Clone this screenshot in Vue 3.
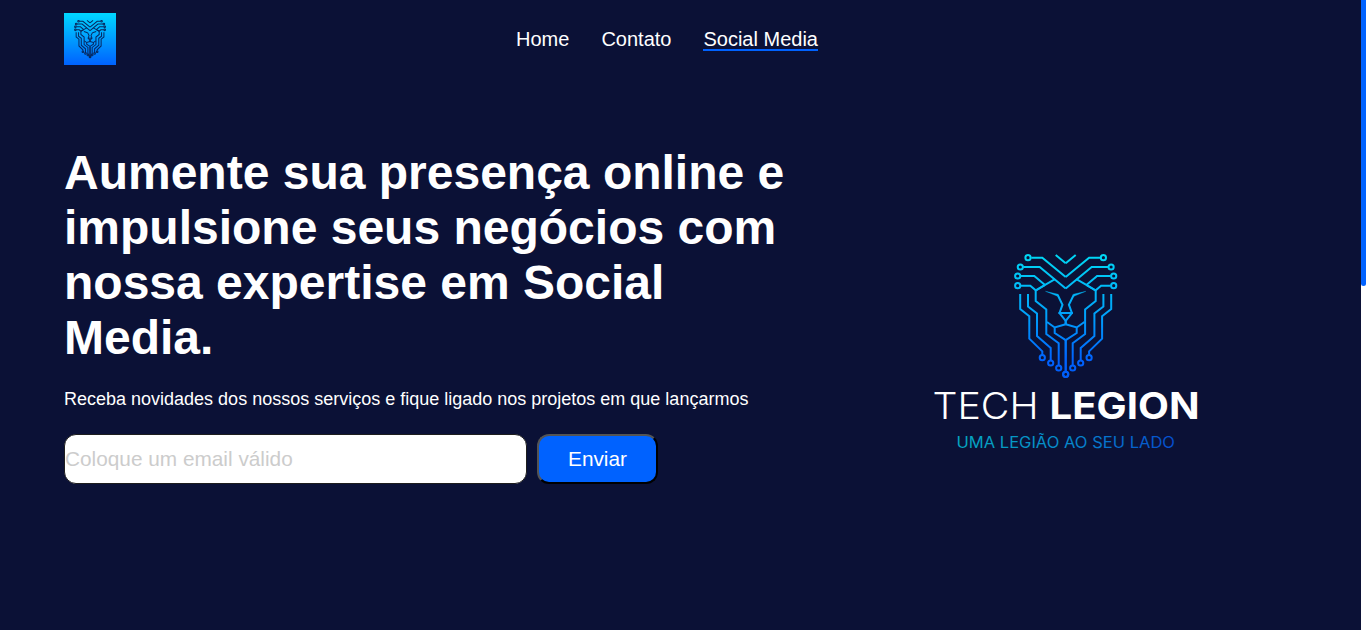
<script setup>
import { ref } from 'vue'

const links = [
  { label: 'Home', active: false },
  { label: 'Contato', active: false },
  { label: 'Social Media', active: true },
]
const email = ref('')

// Circuit traces of the left half; the right half is mirrored around x = 65.7
const traces = [
  'M31.3 12.7H42.3L65.7 32',
  'M23.3 22H39.7L65.7 43.5',
  'M20.7 31H34.3L45 40',
  'M20.7 40.7H30.3L35.7 45.3L55 34.2',
  'M55.7 10L65.7 18.2',
  'M20.2 49V64L29.3 71.3V93.7L42.3 106.3V109.7',
  'M28 49V61.5L37 68.5V91L50.7 103V115',
  'M35.7 45.3V56L46.3 64.5V89L58.7 98.3V120',
  'M45 40L36 45.5',
  'M47 77L54.7 82.5L65.7 79.3M54.7 82.5V88L65.7 95.2',
  'M57.7 50L62.5 59.7L59.5 68L65.7 75.8V79.3',
  'M58.5 68H66',
  'M65.7 95V126.3',
]
const nodes = [
  [28, 12.7], [20.3, 22], [17.7, 31], [17.7, 40.7],
  [42.3, 112.7], [50.7, 118], [58.7, 123], [65.7, 129.3],
]
</script>

<template>
  <div class="page">
    <main class="content">
      <header class="header">
        <svg class="mark" viewBox="0 0 52 52">
          <defs>
            <linearGradient id="tile" x1="0" y1="0" x2="0" y2="1">
              <stop offset="0" stop-color="#00d8ff" />
              <stop offset="1" stop-color="#0062ff" />
            </linearGradient>
          </defs>
          <rect width="52" height="52" fill="url(#tile)" />
          <g transform="translate(6 4.4) scale(.305)" stroke="#07285f" stroke-width="3.3" fill="none">
            <g v-for="side in 2" :key="side" :transform="side === 2 ? 'translate(131.4 0) scale(-1 1)' : undefined">
              <path v-for="d in traces" :key="d" :d="d" />
              <path d="M45.5 46.5L57.7 50" />
              <circle v-for="(n, i) in nodes" :key="i" :cx="n[0]" :cy="n[1]" r="2.7" />
            </g>
          </g>
        </svg>
        <nav class="nav">
          <a v-for="link in links" :key="link.label" :class="{ active: link.active }">{{ link.label }}</a>
        </nav>
      </header>

      <section class="hero">
        <div class="copy">
          <h1>Aumente sua presença online e impulsione seus negócios com nossa expertise em Social Media.</h1>
          <p>Receba novidades dos nossos serviços e fique ligado nos projetos em que lançarmos</p>
          <form class="form" @submit.prevent>
            <input v-model="email" type="email" placeholder="Coloque um email válido" />
            <button type="submit">Enviar</button>
          </form>
        </div>
        <svg class="brand" viewBox="0 0 280 220">
          <defs>
            <linearGradient id="lion" gradientUnits="userSpaceOnUse" x1="0" y1="8" x2="0" y2="134">
              <stop offset="0" stop-color="#00daf5" />
              <stop offset=".5" stop-color="#00a0fa" />
              <stop offset=".85" stop-color="#0062ff" />
              <stop offset="1" stop-color="#005cf5" />
            </linearGradient>
            <linearGradient id="tagline" gradientUnits="userSpaceOnUse" x1="30" y1="0" x2="246" y2="0">
              <stop offset="0" stop-color="#04a7bf" />
              <stop offset=".5" stop-color="#0689cb" />
              <stop offset="1" stop-color="#054dce" />
            </linearGradient>
          </defs>
          <g transform="translate(72 0)" stroke="url(#lion)" stroke-width="2" fill="none">
            <g v-for="side in 2" :key="side" :transform="side === 2 ? 'translate(131.4 0) scale(-1 1)' : undefined">
              <path v-for="d in traces" :key="d" :d="d" />
              <path d="M45.5 46.3L58.3 49.3L57.4 51.2Z" fill="url(#lion)" stroke-width=".3" />
              <circle v-for="(n, i) in nodes" :key="i" :cx="n[0]" :cy="n[1]" r="2.6" />
            </g>
          </g>
          <text class="tech" x="4.5" y="174" textLength="106" lengthAdjust="spacingAndGlyphs">TECH</text>
          <text class="legion" x="121.5" y="174" textLength="150" lengthAdjust="spacingAndGlyphs">LEGION</text>
          <text class="tagline" x="28.5" y="203" textLength="218.5" lengthAdjust="spacingAndGlyphs">UMA LEGIÃO AO SEU LADO</text>
        </svg>
      </section>
    </main>
    <div class="track"><div class="thumb"></div></div>
  </div>
</template>

<style>
body {
  background: #0b1136;
  overflow: hidden;
}
</style>

<style scoped>
.page {
  display: flex;
  height: 630px;
  overflow: hidden;
  background: #0b1136;
  color: #fff;
  font-family: "Liberation Sans", Arial, sans-serif;
}
.content {
  flex: 1;
  padding: 0 64px;
}
.header {
  display: grid;
  grid-template-columns: 52px 1fr 52px;
  align-items: center;
  height: 78px;
}
.mark {
  display: block;
  width: 52px;
  height: 52px;
}
.nav {
  display: flex;
  justify-content: center;
  gap: 32px;
  padding-right: 27px;
  font-size: 20px;
}
.nav a {
  border-bottom: 2px solid transparent;
  margin-top: 2px;
  line-height: 20px;
}
.nav a.active {
  border-bottom-color: #0062ff;
}
.hero {
  display: flex;
  align-items: flex-start;
}
.copy {
  width: 740px;
  padding-top: 67px;
}
h1 {
  margin: 0;
  font-size: 48px;
  font-weight: 700;
  line-height: 55px;
}
p {
  margin: 24px 0 0;
  font-size: 18px;
  line-height: 21px;
}
.form {
  display: flex;
  gap: 10px;
  margin-top: 24px;
}
input,
button {
  box-sizing: border-box;
  height: 50px;
  font-family: inherit;
  font-size: 20.8px;
  border-radius: 12px;
}
input {
  width: 463px;
  padding: 0;
  border: 1px solid #1e1e1e;
  background: #fff;
  color: #111;
  outline: none;
}
input::placeholder {
  color: #ccc;
  opacity: 1;
}
button {
  width: 121px;
  padding: 0;
  border: 2px outset #000;
  background: #0062ff;
  color: #fff;
}
.brand {
  width: 280px;
  height: 220px;
  margin: 167px 0 0 124px;
}
.tech,
.legion {
  font-family: Inter, sans-serif;
  font-size: 36.3px;
  fill: #fff;
}
.tech {
  font-weight: 300;
}
.legion {
  font-weight: 700;
}
.tagline {
  font-family: Inter, sans-serif;
  font-size: 15.6px;
  font-weight: 400;
  fill: url(#tagline);
}
.track {
  width: 5px;
  background: #fff;
}
.thumb {
  height: 286px;
  border-radius: 0 0 3px 3px;
  background: #0062ff;
}
</style>
